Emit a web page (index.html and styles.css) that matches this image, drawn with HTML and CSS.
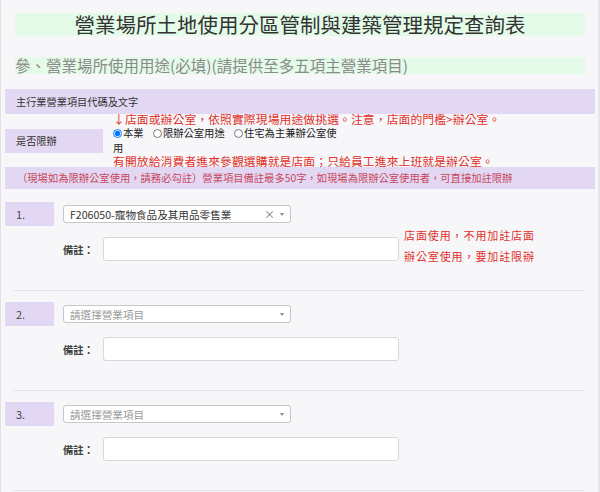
FILE: index.html
```html
<!DOCTYPE html>
<html lang="zh-Hant">
<head>
<meta charset="utf-8">
<title>營業場所土地使用分區管制與建築管理規定查詢表</title>
<link rel="stylesheet" href="styles.css">
</head>
<body>
<div class="page">
  <h1 class="title">營業場所土地使用分區管制與建築管理規定查詢表</h1>
  <h2 class="subtitle">參、營業場所使用用途(必填)(請提供至多五項主營業項目)</h2>

  <div class="band band-head">主行業營業項目代碼及文字</div>

  <div class="limit-row">
    <div class="limit-label">是否限辦</div>
    <div class="limit-body">
      <div class="hint hint-top">↓店面或辦公室，依照實際現場用途做挑選。注意，店面的門檻&gt;辦公室。</div>
      <div class="radios">
        <label class="opt"><input type="radio" name="lim" checked>本業</label>
        <label class="opt"><input type="radio" name="lim">限辦公室用途</label>
        <label class="opt"><input type="radio" name="lim">住宅為主兼辦公室使用</label>
      </div>
      <div class="hint hint-bottom">有開放給消費者進來參觀選購就是店面；只給員工進來上班就是辦公室。</div>
    </div>
  </div>

  <div class="band band-note">（現場如為限辦公室使用，請務必勾註）營業項目備註最多50字，如現場為限辦公室使用者，可直接加註限辦</div>

  <div class="entries">
    <div class="entry">
      <div class="entry-top">
        <div class="num">1.</div>
        <div class="select">
          <span class="sel-text">F206050-寵物食品及其用品零售業</span>
          <span class="sel-clear">×</span>
          <span class="sel-arrow"></span>
        </div>
      </div>
      <div class="entry-remark">
        <span class="remark-label">備註：</span>
        <div class="input"></div>
        <div class="side-note">店面使用，不用加註店面<br>辦公室使用，要加註限辦</div>
      </div>
      <hr class="sep">
    </div>

    <div class="entry">
      <div class="entry-top">
        <div class="num">2.</div>
        <div class="select">
          <span class="sel-text placeholder">請選擇營業項目</span>
          <span class="sel-arrow"></span>
        </div>
      </div>
      <div class="entry-remark">
        <span class="remark-label">備註：</span>
        <div class="input"></div>
      </div>
      <hr class="sep">
    </div>

    <div class="entry">
      <div class="entry-top">
        <div class="num">3.</div>
        <div class="select">
          <span class="sel-text placeholder">請選擇營業項目</span>
          <span class="sel-arrow"></span>
        </div>
      </div>
      <div class="entry-remark">
        <span class="remark-label">備註：</span>
        <div class="input"></div>
      </div>
      <hr class="sep">
    </div>
  </div>
</div>
</body>
</html>
```

FILE: styles.css
```css
* { box-sizing: border-box; }
html, body { margin: 0; padding: 0; }
body {
  background: #f7f7f9;
  font-family: "Noto Sans CJK TC", "Noto Sans", sans-serif;
  color: #333;
}
.page {
  width: 600px;
  height: 492px;
  padding: 13px 3px 0 4px;
  border-left: 1px solid #e2e2e6;
  border-right: 2px solid #e6e6ea;
  overflow: hidden;
}
.title {
  margin: 0 10px 0 10px;
  height: 23px;
  line-height: 23px;
  background: #e3fbe8;
  font-size: 20.5px;
  font-weight: 400;
  text-align: center;
  color: #333;
}
.subtitle {
  margin: 21px 10px 0 10px;
  height: 17px;
  line-height: 17px;
  background: #e3fbe8;
  font-size: 15.5px;
  font-weight: 400;
  color: #8a8a8a;
  white-space: nowrap;
}
.band {
  background: #e3d8f3;
  white-space: nowrap;
}
.band-head {
  margin-top: 15px;
  height: 25px;
  line-height: 25px;
  padding-left: 11px;
  font-size: 10.2px;
  color: #333;
}
.limit-row {
  display: flex;
  align-items: center;
  height: 53px;
}
.limit-label {
  width: 98px;
  height: 24px;
  line-height: 24px;
  padding-left: 11px;
  background: #e3d8f3;
  font-size: 10.2px;
  flex: none;
}
.limit-body {
  margin-left: 10px;
  align-self: flex-start;
}
.hint {
  color: #e0302a;
  font-size: 11.8px;
  line-height: 12px;
  height: 12px;
  white-space: nowrap;
  letter-spacing: 0.1px;
}
.hint-top { margin-top: -1px; }
.radios {
  width: 228px;
  height: 30px;
  font-size: 10.3px;
  line-height: 15px;
  color: #222;
}
.opt { margin-right: 7px; }
.opt input {
  width: 9px;
  height: 9px;
  margin: 0 1px 0 0;
  vertical-align: -1px;
}
.band-note {
  height: 22px;
  line-height: 22px;
  padding-left: 12px;
  font-size: 10.3px;
  color: #c8475c;
}
.entries { padding-top: 2px; }
.entry { padding-top: 11px; }
.entry-top {
  display: flex;
  align-items: center;
  height: 24px;
}
.num {
  width: 49px;
  height: 24px;
  line-height: 24px;
  padding-left: 11px;
  background: #e3d8f3;
  font-size: 11px;
  color: #444;
  flex: none;
}
.select {
  margin-left: 9px;
  width: 228px;
  height: 18px;
  border: 1px solid #c8c8cc;
  border-radius: 3px;
  background: #fff;
  display: flex;
  align-items: center;
  padding: 0 6px 0 6px;
  font-size: 10.6px;
  color: #333;
}
.sel-text { flex: 1; white-space: nowrap; }
.placeholder { color: #9a9a9a; }
.sel-clear {
  color: #777;
  font-size: 11px;
  margin-right: 5px;
}
.sel-arrow {
  width: 0;
  height: 0;
  border-left: 2.5px solid transparent;
  border-right: 2.5px solid transparent;
  border-top: 3px solid #888;
}
.entry-remark {
  display: flex;
  align-items: center;
  height: 24px;
  margin-top: 11px;
  margin-left: 58px;
}
.remark-label {
  width: 40px;
  font-size: 10.3px;
  font-weight: 700;
  color: #444;
}
.input {
  width: 296px;
  height: 24px;
  border: 1px solid #d8d8dc;
  border-radius: 3px;
  background: #fff;
}
.side-note {
  margin: -12px 0 -6px 5px;
  color: #e0302a;
  font-size: 11px;
  line-height: 21px;
  letter-spacing: 0.9px;
  white-space: nowrap;
}
.sep {
  margin: 29px 11px 0 9px;
  border: 0;
  border-top: 1px solid #e4e4e8;
  height: 0;
}
```
